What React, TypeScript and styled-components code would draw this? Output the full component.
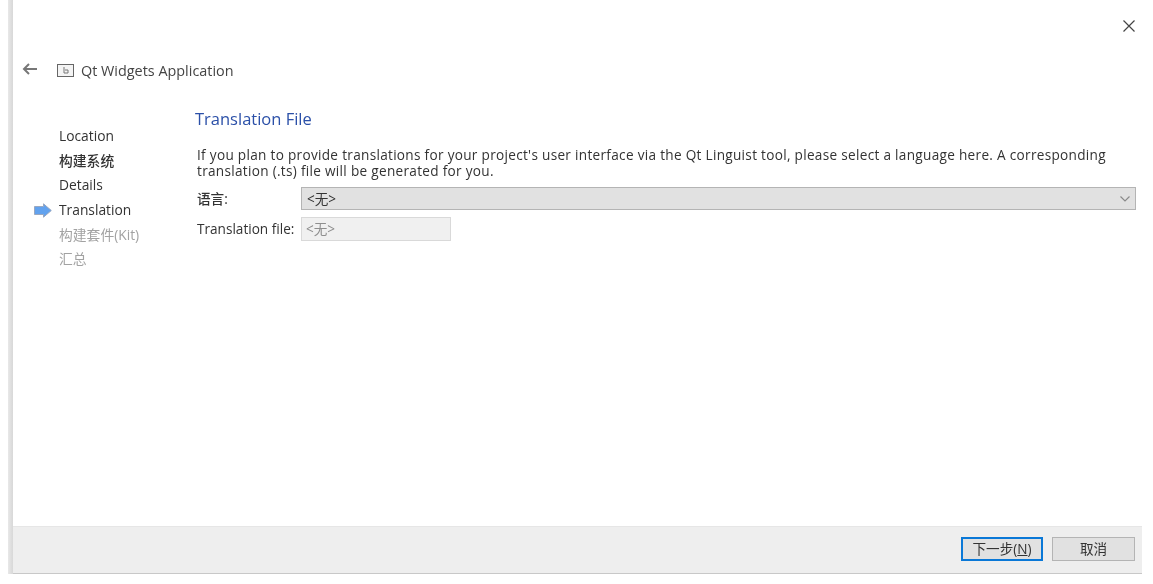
import React, { FC } from 'react';
import styled, { createGlobalStyle } from 'styled-components';

const GlobalStyle = createGlobalStyle`
  html, body {
    margin: 0;
    padding: 0;
    background: #ffffff;
  }
  body {
    font-family: "Open Sans", "Noto Sans CJK SC", sans-serif;
    font-size: 13.6px;
    color: #333333;
  }
`;

const Page = styled.div`
  width: 1153px;
  height: 584px;
  overflow: hidden;
  display: flex;
  align-items: flex-start;
  padding-left: 8px;
  box-sizing: border-box;
  filter: blur(0.45px);
`;

const EdgeStrip = styled.div`
  width: 5px;
  height: 574px;
  flex: none;
  background: linear-gradient(to right, #e8e8e8, #d8d8d8);
`;

const Wizard = styled.div`
  width: 1129px;
  height: 574px;
  flex: none;
  display: flex;
  flex-direction: column;
`;

const TopBar = styled.div`
  height: 51px;
  flex: none;
  display: flex;
  justify-content: flex-end;
  padding: 19px 6px 0 0;
  box-sizing: border-box;
`;

const HeaderRow = styled.div`
  height: 38px;
  flex: none;
  display: flex;
  align-items: center;
  padding-left: 9px;
  margin-bottom: 18px;
`;

const BackIcon = styled.svg`
  width: 16px;
  height: 14px;
  margin-right: 19px;
  margin-top: -3px;
`;

const AppIcon = styled.svg`
  width: 17px;
  height: 13px;
  margin-right: 7px;
`;

const AppTitle = styled.span`
  font-size: 14.4px;
  color: #444444;
`;

const Body = styled.div`
  flex: 1;
  display: flex;
  min-height: 0;
`;

const StepList = styled.ul`
  width: 182px;
  flex: none;
  list-style: none;
  margin: 0;
  padding: 17px 0 0 21px;
  box-sizing: border-box;
`;

const Step = styled.li<{ $muted?: boolean; $strong?: boolean }>`
  height: 24.6px;
  display: flex;
  align-items: center;
  font-size: 13.8px;
  line-height: 16px;
  font-weight: ${(p) => (p.$strong ? 500 : 400)};
  color: ${(p) => (p.$muted ? '#a2a2a2' : '#333333')};
`;

const ArrowSlot = styled.span`
  width: 25px;
  flex: none;
  display: flex;
  align-items: center;
`;

const Content = styled.div`
  flex: 1;
  padding-right: 6px;
  min-width: 0;
`;

const PageTitle = styled.h1`
  margin: 0 0 16px;
  font-size: 16.5px;
  line-height: 24px;
  font-weight: 400;
  color: #2b50a8;
`;

const Intro = styled.p`
  margin: 0 0 8px 2px;
  font-size: 13.6px;
  line-height: 16px;
  letter-spacing: 0.3px;
  color: #333333;
`;

const FormRow = styled.div`
  display: flex;
  align-items: center;
  margin-left: 2px;
  margin-bottom: 7px;
`;

const FieldLabel = styled.label<{ $strong?: boolean }>`
  width: 104px;
  flex: none;
  line-height: 16px;
  font-weight: ${(p) => (p.$strong ? 500 : 400)};
  color: #333333;
`;

const Select = styled.div`
  flex: 1;
  height: 23px;
  box-sizing: border-box;
  display: flex;
  align-items: center;
  justify-content: space-between;
  padding: 0 4px 0 5px;
  line-height: 16px;
  background: #e1e1e1;
  border: 1px solid #b4b4b4;
  color: #333333;
`;

const ReadOnlyInput = styled.div`
  width: 150px;
  height: 24px;
  box-sizing: border-box;
  display: flex;
  align-items: center;
  padding: 0 4px;
  line-height: 16px;
  background: #f0f0f0;
  border: 1px solid #d9d9d9;
  color: #8e8e8e;
`;

const Footer = styled.div`
  height: 48px;
  flex: none;
  display: flex;
  align-items: center;
  justify-content: flex-end;
  gap: 9px;
  padding: 0 7px 3px 0;
  box-sizing: border-box;
  background: #eeeeee;
  border-top: 1px solid #e6e6e6;
  border-bottom: 1px solid #c8c8c8;
`;

const WizardButton = styled.button<{ $focused?: boolean }>`
  width: ${(p) => (p.$focused ? '82px' : '83px')};
  height: 24px;
  box-sizing: border-box;
  padding: 0;
  font: inherit;
  line-height: 16px;
  color: #333333;
  background: #e1e1e1;
  border: ${(p) => (p.$focused ? '2px solid #0a78d7' : '1px solid #b4b4b4')};
`;

const steps = [
  { label: 'Location' },
  { label: '构建系统', strong: true },
  { label: 'Details' },
  { label: 'Translation', current: true },
  { label: '构建套件(Kit)', muted: true },
  { label: '汇总', muted: true },
];

const CurrentArrow: FC = () => (
  <svg width="18" height="15" viewBox="0 0 18 15">
    <path d="M0.5 3.5h9V0.8l7.8 6.700-7.800 6.700v-2.700h-9z" fill="#62a2ee" stroke="#9aa8c0" strokeWidth="1" />
  </svg>
);

const App: FC = () => (
  <Page>
    <GlobalStyle />
    <EdgeStrip />
    <Wizard>
      <TopBar>
        <svg width="14" height="14" viewBox="0 0 14 14">
          <path d="M1.5 1.5l11 11M12.5 1.5l-11 11" stroke="#444444" strokeWidth="1.2" fill="none" />
        </svg>
      </TopBar>
      <HeaderRow>
        <BackIcon viewBox="0 0 16 14">
          <path d="M15 7H2M7 2L2 7l5 5" stroke="#777777" strokeWidth="2" fill="none" />
        </BackIcon>
        <AppIcon viewBox="0 0 17 13">
          <rect x="0.5" y="0.5" width="16" height="12" fill="#f4f4f4" stroke="#666666" />
          <path d="M7 3v6h4V6H8" stroke="#777777" fill="none" />
        </AppIcon>
        <AppTitle>Qt Widgets Application</AppTitle>
      </HeaderRow>
      <Body>
        <StepList>
          {steps.map((step) => (
            <Step key={step.label} $muted={step.muted} $strong={step.strong}>
              <ArrowSlot>{step.current && <CurrentArrow />}</ArrowSlot>
              {step.label}
            </Step>
          ))}
        </StepList>
        <Content>
          <PageTitle>Translation File</PageTitle>
          <Intro>
            If you plan to provide translations for your project's user interface via the Qt Linguist tool, please
            select a language here. A corresponding translation (.ts) file will be generated for you.
          </Intro>
          <FormRow>
            <FieldLabel $strong>语言:</FieldLabel>
            <Select>
              &lt;无&gt;
              <svg width="12" height="8" viewBox="0 0 12 8">
                <path d="M1.500 1.500l4.500 4.500 4.500-4.500" stroke="#8a8a8a" strokeWidth="1.2" fill="none" />
              </svg>
            </Select>
          </FormRow>
          <FormRow>
            <FieldLabel>Translation file:</FieldLabel>
            <ReadOnlyInput>&lt;无&gt;</ReadOnlyInput>
          </FormRow>
        </Content>
      </Body>
      <Footer>
        <WizardButton $focused>
          下一步(<u>N</u>)
        </WizardButton>
        <WizardButton>取消</WizardButton>
      </Footer>
    </Wizard>
  </Page>
);

export default App;
